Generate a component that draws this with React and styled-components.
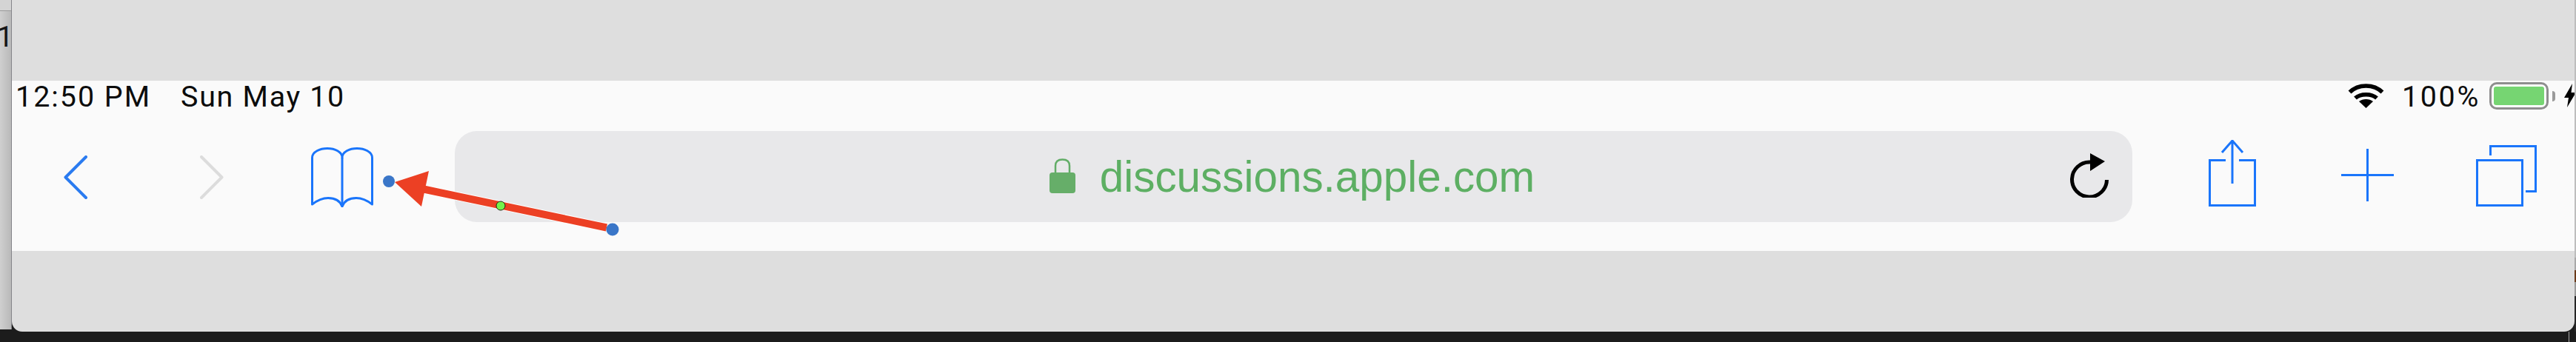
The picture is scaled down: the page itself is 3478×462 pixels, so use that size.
import React from 'react'
import styled, { createGlobalStyle } from 'styled-components'

const Global = createGlobalStyle`
  html, body { margin: 0; padding: 0; background: #1c1c1c; }
  body { width: 3478px; height: 462px; overflow: hidden; font-family: "Liberation Sans", Arial, sans-serif; }
`

const Page = styled.div`
  position: relative;
  width: 3478px;
  height: 462px;
  display: flex;
  flex-direction: column;
  overflow: hidden;
  background: #1c1c1c;
`
const Main = styled.div`
  display: flex;
  height: 448px;
`
const SideStrip = styled.div`
  width: 15px;
  height: 445px;
  flex: none;
  overflow: hidden;
  border-right: 1px solid #85858a;
  background: linear-gradient(to right, #cfcfcf, #b9b9b9);
`
const StripTab = styled.div`
  height: 14px;
  border-bottom: 1px solid #9b9b9b;
  background: #d4d4d4;
`
const StripLabel = styled.div`
  margin: 16px 0 0 -4px;
  font-family: Roboto, "Liberation Sans", sans-serif;
  font-size: 39px;
  line-height: 39px;
  color: #151515;
`
const EdgeStrip = styled.div`
  width: 2px;
  flex: none;
  background: linear-gradient(
    to bottom,
    #bdbdbd 0,
    #bdbdbd 348px,
    #a8a8a8 348px,
    #a8a8a8 365px,
    #6b3a1a 365px,
    #6b3a1a 381px,
    #9a9a9a 381px,
    #9a9a9a 400px,
    #262626 400px
  );
`
const Window = styled.div`
  flex: 1;
  min-width: 0;
  display: flex;
  flex-direction: column;
  background: #dedede;
  border-radius: 0 0 14px 14px;
  overflow: hidden;
`
const TopGap = styled.div`
  height: 109px;
  flex: none;
`
const SafariBar = styled.div`
  height: 230px;
  flex: none;
  background: #fafafa;
  display: flex;
  flex-direction: column;
`
const StatusRow = styled.div`
  height: 68px;
  box-sizing: border-box;
  padding: 2px 0 0 5px;
  display: flex;
  align-items: flex-start;
  font-family: Roboto, "Liberation Sans", sans-serif;
  font-size: 39.4px;
  line-height: 39px;
  letter-spacing: 2px;
  color: #0c0c0c;
  white-space: nowrap;
`
const StatusDate = styled.span`
  margin-left: 40px;
  letter-spacing: 1.7px;
`
const StatusPercent = styled.span`
  letter-spacing: 2.7px;
`
const StatusRight = styled.div`
  margin-left: auto;
  margin-right: -2px;
  display: flex;
  align-items: flex-start;
`
const BatteryShell = styled.div`
  width: 80px;
  height: 37px;
  box-sizing: border-box;
  margin: 0 0 0 12px;
  padding: 3px;
  border: 3px solid #8e8e8e;
  border-radius: 10px;
  background: #fdfdfd;
`
const BatteryFill = styled.div`
  height: 100%;
  border-radius: 3px;
  background: #76d572;
`
const BatteryNub = styled.div`
  width: 4px;
  height: 14px;
  margin: 12px 12px 0 5px;
  border-radius: 0 4px 4px 0;
  background: #9a9a9a;
`
const Toolbar = styled.div`
  height: 123px;
  padding: 0 51px 0 70px;
  display: flex;
  align-items: center;
`
const Omnibox = styled.div`
  flex: 1;
  height: 123px;
  margin: 0 103px 0 110px;
  padding: 0 32px 0 28px;
  box-sizing: border-box;
  display: grid;
  grid-template-columns: 1fr auto 1fr;
  align-items: center;
  border-radius: 30px;
  background: #e8e8ea;
`
const Address = styled.div`
  grid-column: 2;
  display: flex;
  align-items: center;
  gap: 33px;
  font-size: 58.4px;
  line-height: 66px;
  color: #5daf63;
  white-space: nowrap;
`
const ReloadSlot = styled.div`
  grid-column: 3;
  justify-self: end;
  display: flex;
  margin-top: -3px;
`
const Icon = styled.svg`
  display: block;
  flex: none;
  margin: ${p => p.$margin || '0'};
`
const BLUE = '#1a75fb'

const Annotation = styled.svg`
  position: absolute;
  left: 510px;
  top: 220px;
  pointer-events: none;
`
const Footer = styled.div`
  flex: 1;
  display: flex;
  justify-content: flex-end;
`
const FooterLine = styled.div`
  width: 1px;
  margin-right: 9px;
  background: #a9a9a9;
`

function Chevron({ flip, color, margin }) {
  return (
    <Icon width="32" height="59" viewBox="0 0 32 59" fill="none" $margin={margin}>
      <path
        d={flip ? 'M2 2L29.5 29.5L2 57' : 'M30 2L2.5 29.5L30 57'}
        stroke={color}
        strokeWidth="4"
        strokeLinecap="round"
        strokeLinejoin="round"
      />
    </Icon>
  )
}

export default function App() {
  return (
    <Page>
      <Global />
      <Main>
        <SideStrip>
          <StripTab />
          <StripLabel>1</StripLabel>
        </SideStrip>
        <Window>
          <TopGap />
          <SafariBar>
            <StatusRow>
              <span>12:50 PM</span>
              <StatusDate>Sun May 10</StatusDate>
              <StatusRight>
                <Icon width="49" height="34" viewBox="0 0 49 34" fill="none" $margin="1px 24px 0 0">
                  <path d="M2.5 12.5C14 1 35 1 46.5 12.5" stroke="#000" strokeWidth="5.5" />
                  <path d="M10 20.5C17 14 32 14 39 20.5" stroke="#000" strokeWidth="5.5" />
                  <path d="M24.5 34L15 25C20 21 29 21 34 25Z" fill="#000" />
                </Icon>
                <StatusPercent>100%</StatusPercent>
                <BatteryShell>
                  <BatteryFill />
                </BatteryShell>
                <BatteryNub />
                <Icon width="16" height="32" viewBox="0 0 16 32" $margin="2px 0 0 0">
                  <path d="M11 0L0 19H6L4 32L16 12H9.5Z" fill="#000" />
                </Icon>
              </StatusRight>
            </StatusRow>
            <Toolbar>
              <Chevron color="#2a7bf0" margin="2px 0 0 0" />
              <Chevron flip color="#dcdcdc" margin="2px 0 0 152px" />
              <Icon width="84" height="81" viewBox="0 0 84 81" fill="none" $margin="2px 0 0 118px">
                <path
                  d="M1.5 77V14C1.5 6 12 1.5 22 1.5C32 1.5 42 6 42 14C42 6 52 1.5 62 1.5C72 1.5 82.5 6 82.5 14V77C76 72 69 68.5 61 68.5C52 68.5 45 72 42 80C39 72 32 68.5 23 68.5C15 68.5 8 72 1.5 77Z"
                  stroke={BLUE}
                  strokeWidth="3"
                  strokeLinejoin="round"
                />
                <path d="M42 14V80" stroke={BLUE} strokeWidth="3" />
              </Icon>
              <Omnibox>
                <Address>
                  <Icon width="35" height="47" viewBox="0 0 35 47" fill="none" $margin="-2px 0 0 0">
                    <path d="M8 20V10C8 4 12 1.5 17.5 1.5C23 1.5 27 4 27 10V20" stroke="#62ad67" strokeWidth="2.5" />
                    <rect x="0" y="19" width="35" height="28" rx="4" fill="#66ae69" />
                  </Icon>
                  <span>discussions.apple.com</span>
                </Address>
                <ReloadSlot>
                  <Icon width="52" height="60" viewBox="0 0 52 60" fill="none">
                    <path d="M49.5 36A23.5 23.5 0 1 1 27 12" stroke="#000" strokeWidth="5" />
                    <path d="M27 0L47 11L27 24Z" fill="#000" />
                  </Icon>
                </ReloadSlot>
              </Omnibox>
              <Icon width="64" height="90" viewBox="0 0 64 90" fill="none" $margin="-9px 0 0 0">
                <path d="M23 27.5H1.5V88.5H62.5V27.5H41" stroke={BLUE} strokeWidth="3" />
                <path d="M32 1V59M18 17L32 1L46 17" stroke={BLUE} strokeWidth="3" />
              </Icon>
              <Icon width="71" height="71" viewBox="0 0 71 71" fill="none" $margin="-4px 0 0 115px">
                <path d="M35.5 0V71M0 35.5H71" stroke={BLUE} strokeWidth="3" />
              </Icon>
              <Icon width="82" height="83" viewBox="0 0 82 83" fill="none" $margin="-2px 0 0 111px">
                <rect x="1.5" y="20.5" width="61" height="61" stroke={BLUE} strokeWidth="3" />
                <path d="M19.5 14V1.5H80.5V62.5H67" stroke={BLUE} strokeWidth="3" />
              </Icon>
            </Toolbar>
          </SafariBar>
        </Window>
        <EdgeStrip />
      </Main>
      <Footer>
        <FooterLine />
      </Footer>
      <Annotation width="330" height="100" viewBox="510 220 330 100">
        <path d="M572 255.5L819 307.5" stroke="#fff" strokeWidth="12" />
        <path d="M572 255.5L819 307.5" stroke="#ec4024" strokeWidth="10" />
        <path d="M533 246L579 231L569 279Z" fill="#ec4024" />
        <circle cx="525" cy="245" r="8" fill="#3a76c8" />
        <circle cx="827" cy="310" r="8.5" fill="#3a76c8" />
        <circle cx="676" cy="278" r="6" fill="#74f24c" stroke="#1e2a14" strokeWidth="1" />
      </Annotation>
    </Page>
  )
}
